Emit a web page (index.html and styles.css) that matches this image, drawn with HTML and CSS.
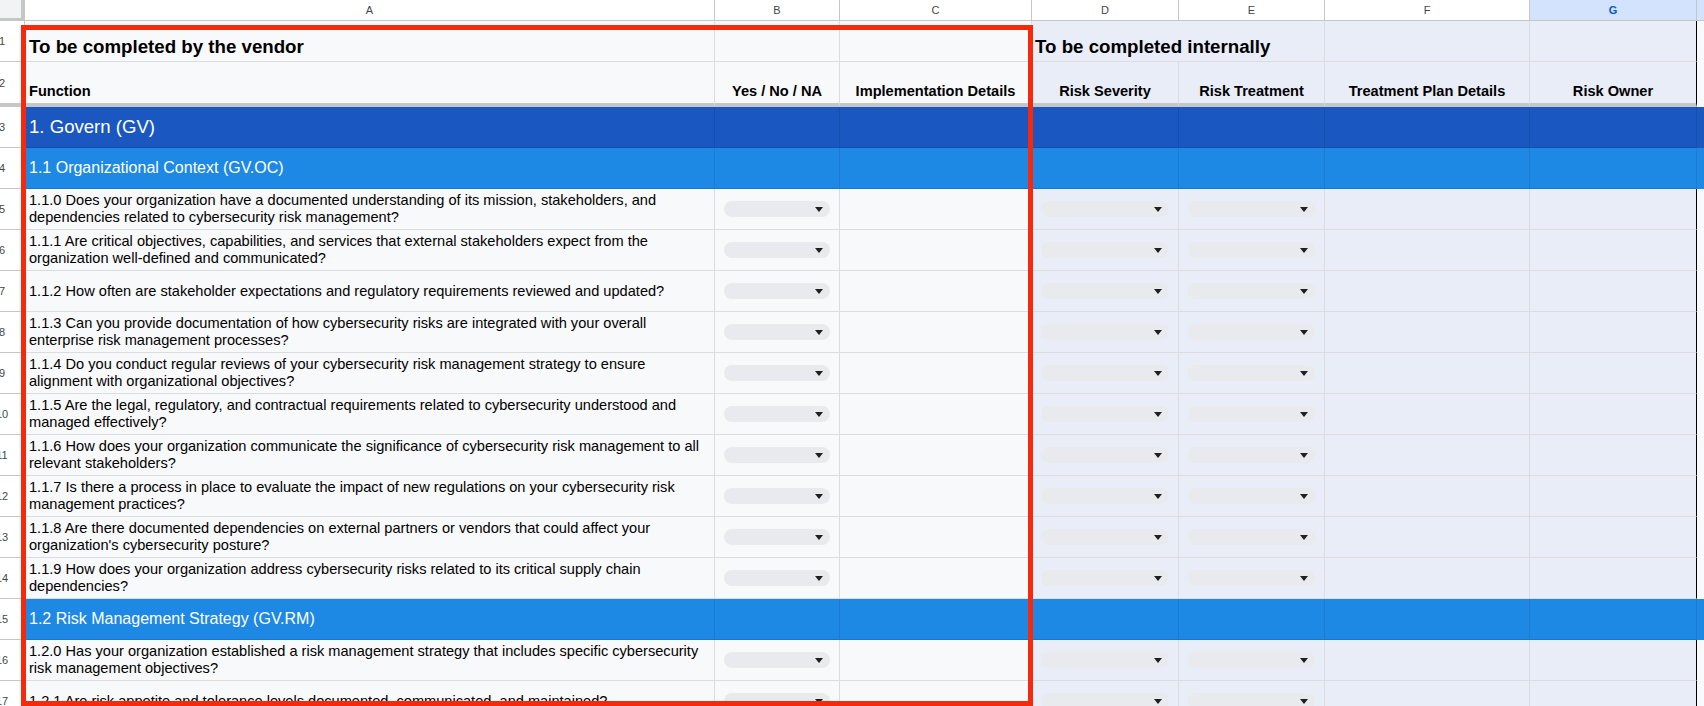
FILE: index.html
```html
<!DOCTYPE html>
<html lang="en">
<head>
<meta charset="utf-8">
<title>Vendor risk questionnaire</title>
<link rel="stylesheet" href="styles.css">
</head>
<body>
<div class="sheet">
  <div class="row colhdr">
    <div class="corner"></div>
    <div>A</div><div>B</div><div>C</div><div>D</div><div>E</div><div>F</div>
    <div class="sel">G</div>
    <div class="sel end"></div>
  </div>

  <div class="row r1">
    <div class="rn"><span>1</span></div>
    <div class="title">To be completed by the vendor</div>
    <div></div><div></div>
    <div class="title span2">To be completed internally</div>
    <div></div><div class="g"></div><div class="end"></div>
  </div>

  <div class="row r2">
    <div class="rn"><span>2</span></div>
    <div class="hd left">Function</div>
    <div class="hd">Yes / No / NA</div>
    <div class="hd">Implementation Details</div>
    <div class="hd">Risk Severity</div>
    <div class="hd">Risk Treatment</div>
    <div class="hd">Treatment Plan Details</div>
    <div class="hd g">Risk Owner</div>
    <div class="end"></div>
  </div>

  <div class="row band dark">
    <div class="rn"><span>3</span></div>
    <div class="big">1. Govern (GV)</div>
    <div></div><div></div><div></div><div></div><div></div><div class="g"></div><div class="end"></div>
  </div>

  <div class="row band">
    <div class="rn"><span>4</span></div>
    <div class="mid">1.1 Organizational Context (GV.OC)</div>
    <div></div><div></div><div></div><div></div><div></div><div class="g"></div><div class="end"></div>
  </div>

  <div class="row">
    <div class="rn"><span>5</span></div>
    <div class="txt">1.1.0 Does your organization have a documented understanding of its mission, stakeholders, and<br>dependencies related to cybersecurity risk management?</div>
    <div class="pick"><span class="dd"></span></div><div></div>
    <div class="pick"><span class="dd"></span></div><div class="pick"><span class="dd"></span></div>
    <div></div><div class="g"></div><div class="end"></div>
  </div>

  <div class="row">
    <div class="rn"><span>6</span></div>
    <div class="txt">1.1.1 Are critical objectives, capabilities, and services that external stakeholders expect from the<br>organization well-defined and communicated?</div>
    <div class="pick"><span class="dd"></span></div><div></div>
    <div class="pick"><span class="dd"></span></div><div class="pick"><span class="dd"></span></div>
    <div></div><div class="g"></div><div class="end"></div>
  </div>

  <div class="row">
    <div class="rn"><span>7</span></div>
    <div class="txt">1.1.2 How often are stakeholder expectations and regulatory requirements reviewed and updated?</div>
    <div class="pick"><span class="dd"></span></div><div></div>
    <div class="pick"><span class="dd"></span></div><div class="pick"><span class="dd"></span></div>
    <div></div><div class="g"></div><div class="end"></div>
  </div>

  <div class="row">
    <div class="rn"><span>8</span></div>
    <div class="txt">1.1.3 Can you provide documentation of how cybersecurity risks are integrated with your overall<br>enterprise risk management processes?</div>
    <div class="pick"><span class="dd"></span></div><div></div>
    <div class="pick"><span class="dd"></span></div><div class="pick"><span class="dd"></span></div>
    <div></div><div class="g"></div><div class="end"></div>
  </div>

  <div class="row">
    <div class="rn"><span>9</span></div>
    <div class="txt">1.1.4 Do you conduct regular reviews of your cybersecurity risk management strategy to ensure<br>alignment with organizational objectives?</div>
    <div class="pick"><span class="dd"></span></div><div></div>
    <div class="pick"><span class="dd"></span></div><div class="pick"><span class="dd"></span></div>
    <div></div><div class="g"></div><div class="end"></div>
  </div>

  <div class="row">
    <div class="rn"><span>10</span></div>
    <div class="txt">1.1.5 Are the legal, regulatory, and contractual requirements related to cybersecurity understood and<br>managed effectively?</div>
    <div class="pick"><span class="dd"></span></div><div></div>
    <div class="pick"><span class="dd"></span></div><div class="pick"><span class="dd"></span></div>
    <div></div><div class="g"></div><div class="end"></div>
  </div>

  <div class="row">
    <div class="rn"><span>11</span></div>
    <div class="txt">1.1.6 How does your organization communicate the significance of cybersecurity risk management to all<br>relevant stakeholders?</div>
    <div class="pick"><span class="dd"></span></div><div></div>
    <div class="pick"><span class="dd"></span></div><div class="pick"><span class="dd"></span></div>
    <div></div><div class="g"></div><div class="end"></div>
  </div>

  <div class="row">
    <div class="rn"><span>12</span></div>
    <div class="txt">1.1.7 Is there a process in place to evaluate the impact of new regulations on your cybersecurity risk<br>management practices?</div>
    <div class="pick"><span class="dd"></span></div><div></div>
    <div class="pick"><span class="dd"></span></div><div class="pick"><span class="dd"></span></div>
    <div></div><div class="g"></div><div class="end"></div>
  </div>

  <div class="row">
    <div class="rn"><span>13</span></div>
    <div class="txt">1.1.8 Are there documented dependencies on external partners or vendors that could affect your<br>organization's cybersecurity posture?</div>
    <div class="pick"><span class="dd"></span></div><div></div>
    <div class="pick"><span class="dd"></span></div><div class="pick"><span class="dd"></span></div>
    <div></div><div class="g"></div><div class="end"></div>
  </div>

  <div class="row">
    <div class="rn"><span>14</span></div>
    <div class="txt">1.1.9 How does your organization address cybersecurity risks related to its critical supply chain<br>dependencies?</div>
    <div class="pick"><span class="dd"></span></div><div></div>
    <div class="pick"><span class="dd"></span></div><div class="pick"><span class="dd"></span></div>
    <div></div><div class="g"></div><div class="end"></div>
  </div>

  <div class="row band">
    <div class="rn"><span>15</span></div>
    <div class="mid">1.2 Risk Management Strategy (GV.RM)</div>
    <div></div><div></div><div></div><div></div><div></div><div class="g"></div><div class="end"></div>
  </div>

  <div class="row">
    <div class="rn"><span>16</span></div>
    <div class="txt">1.2.0 Has your organization established a risk management strategy that includes specific cybersecurity<br>risk management objectives?</div>
    <div class="pick"><span class="dd"></span></div><div></div>
    <div class="pick"><span class="dd"></span></div><div class="pick"><span class="dd"></span></div>
    <div></div><div class="g"></div><div class="end"></div>
  </div>

  <div class="row">
    <div class="rn"><span>17</span></div>
    <div class="txt">1.2.1 Are risk appetite and tolerance levels documented, communicated, and maintained?</div>
    <div class="pick"><span class="dd"></span></div><div></div>
    <div class="pick"><span class="dd"></span></div><div class="pick"><span class="dd"></span></div>
    <div></div><div class="g"></div><div class="end"></div>
  </div>

  <div class="mark"></div>
</div>
</body>
</html>
```

FILE: styles.css
```css
* { box-sizing: border-box; margin: 0; padding: 0; }

html, body {
  width: 1704px;
  height: 706px;
  overflow: hidden;
  background: #f8f9fa;
}

body {
  font-family: "Liberation Sans", Arial, sans-serif;
  color: #000;
}

.sheet {
  position: relative;
}

.row {
  display: grid;
  grid-template-columns: 25px 690px 125px 192px 147px 146px 205px 167px 7px;
  height: 41px;
  background: linear-gradient(to right,
    #fff 0, #fff 25px,
    #f8f9fa 25px, #f8f9fa 1032px,
    #e8edf8 1032px, #e8edf8 1697px,
    #f8f9fa 1697px);
}

.row > div {
  display: flex;
  align-items: center;
  min-width: 0;
  border-right: 1px solid #dadce0;
  border-bottom: 1px solid #dadce0;
  overflow: hidden;
}

.row > .g { border-right: 1px solid #000; }
.row > .end { border-right: 0; border-bottom: 0; }

/* column letters */
.colhdr {
  height: 21px;
  background: #fff;
}
.colhdr > div {
  justify-content: center;
  font-size: 11px;
  color: #444746;
  border-color: #c4c7c5;
}
.colhdr > .corner {
  background: #f1f3f4;
  border-right: 4px solid #c4c7c5;
  border-bottom: 3px solid #c4c7c5;
}
.colhdr > .sel {
  background: #d3e3fd;
  color: #0b57d0;
  font-weight: bold;
}
.colhdr > .end { border-bottom: 1px solid #c4c7c5; border-right: 0; }

/* row numbers */
.row > .rn {
  background: #fff;
  justify-content: center;
  padding-right: 20px;
  font-size: 11px;
  color: #444746;
  border-color: #c4c7c5;
  overflow: visible;
}

/* title row */
.r1 > .title {
  align-items: flex-end;
  padding: 0 3px 3px 4px;
  font-size: 18.7px;
  font-weight: bold;
  white-space: nowrap;
}
.r1 > .span2 {
  grid-column: span 2;
  padding-left: 3px;
}

/* column titles */
.r2 {
  height: 45px;
}
.r2 > div {
  border-bottom: 4px solid #c4c7c5;
}
.r2 > .hd {
  align-items: flex-end;
  justify-content: center;
  padding: 0 3px 4px 3px;
  font-size: 14.6px;
  font-weight: bold;
  white-space: nowrap;
}
.r2 > .left {
  justify-content: flex-start;
  padding-left: 4px;
}

/* section bands */
.band > div:not(.rn):not(.end) {
  background: #1e88e5;
  border-right-color: rgba(0, 0, 0, 0.09);
  border-bottom-color: rgba(0, 0, 0, 0.12);
  color: #fff;
}
.band > .end { background: #1e88e5; }
.dark > div:not(.rn):not(.end) { background: #1a57c1; }
.dark > .end { background: #1a57c1; }

.big {
  padding-left: 4px;
  font-size: 18.6px;
  white-space: nowrap;
}
.mid {
  padding-left: 4px;
  font-size: 16px;
  white-space: nowrap;
}

/* question rows */
.txt {
  padding: 0 3px 0 4px;
  font-size: 14.6px;
  line-height: 16.7px;
  white-space: nowrap;
}

.row > .pick {
  padding: 0 9px 0 9px;
}
.dd {
  flex: 1;
  height: 16px;
  border-radius: 8px;
  background: #e8eaed;
  display: flex;
  align-items: center;
  justify-content: flex-end;
  padding-right: 7px;
}
.dd::after {
  content: "";
  width: 0;
  height: 0;
  border-left: 4px solid transparent;
  border-right: 4px solid transparent;
  border-top: 5px solid #1f1f1f;
}

/* annotation frame */
.mark {
  position: absolute;
  left: 21px;
  top: 25px;
  width: 1012px;
  height: 681px;
  border: 5px solid #f6290c;
  pointer-events: none;
}
```
